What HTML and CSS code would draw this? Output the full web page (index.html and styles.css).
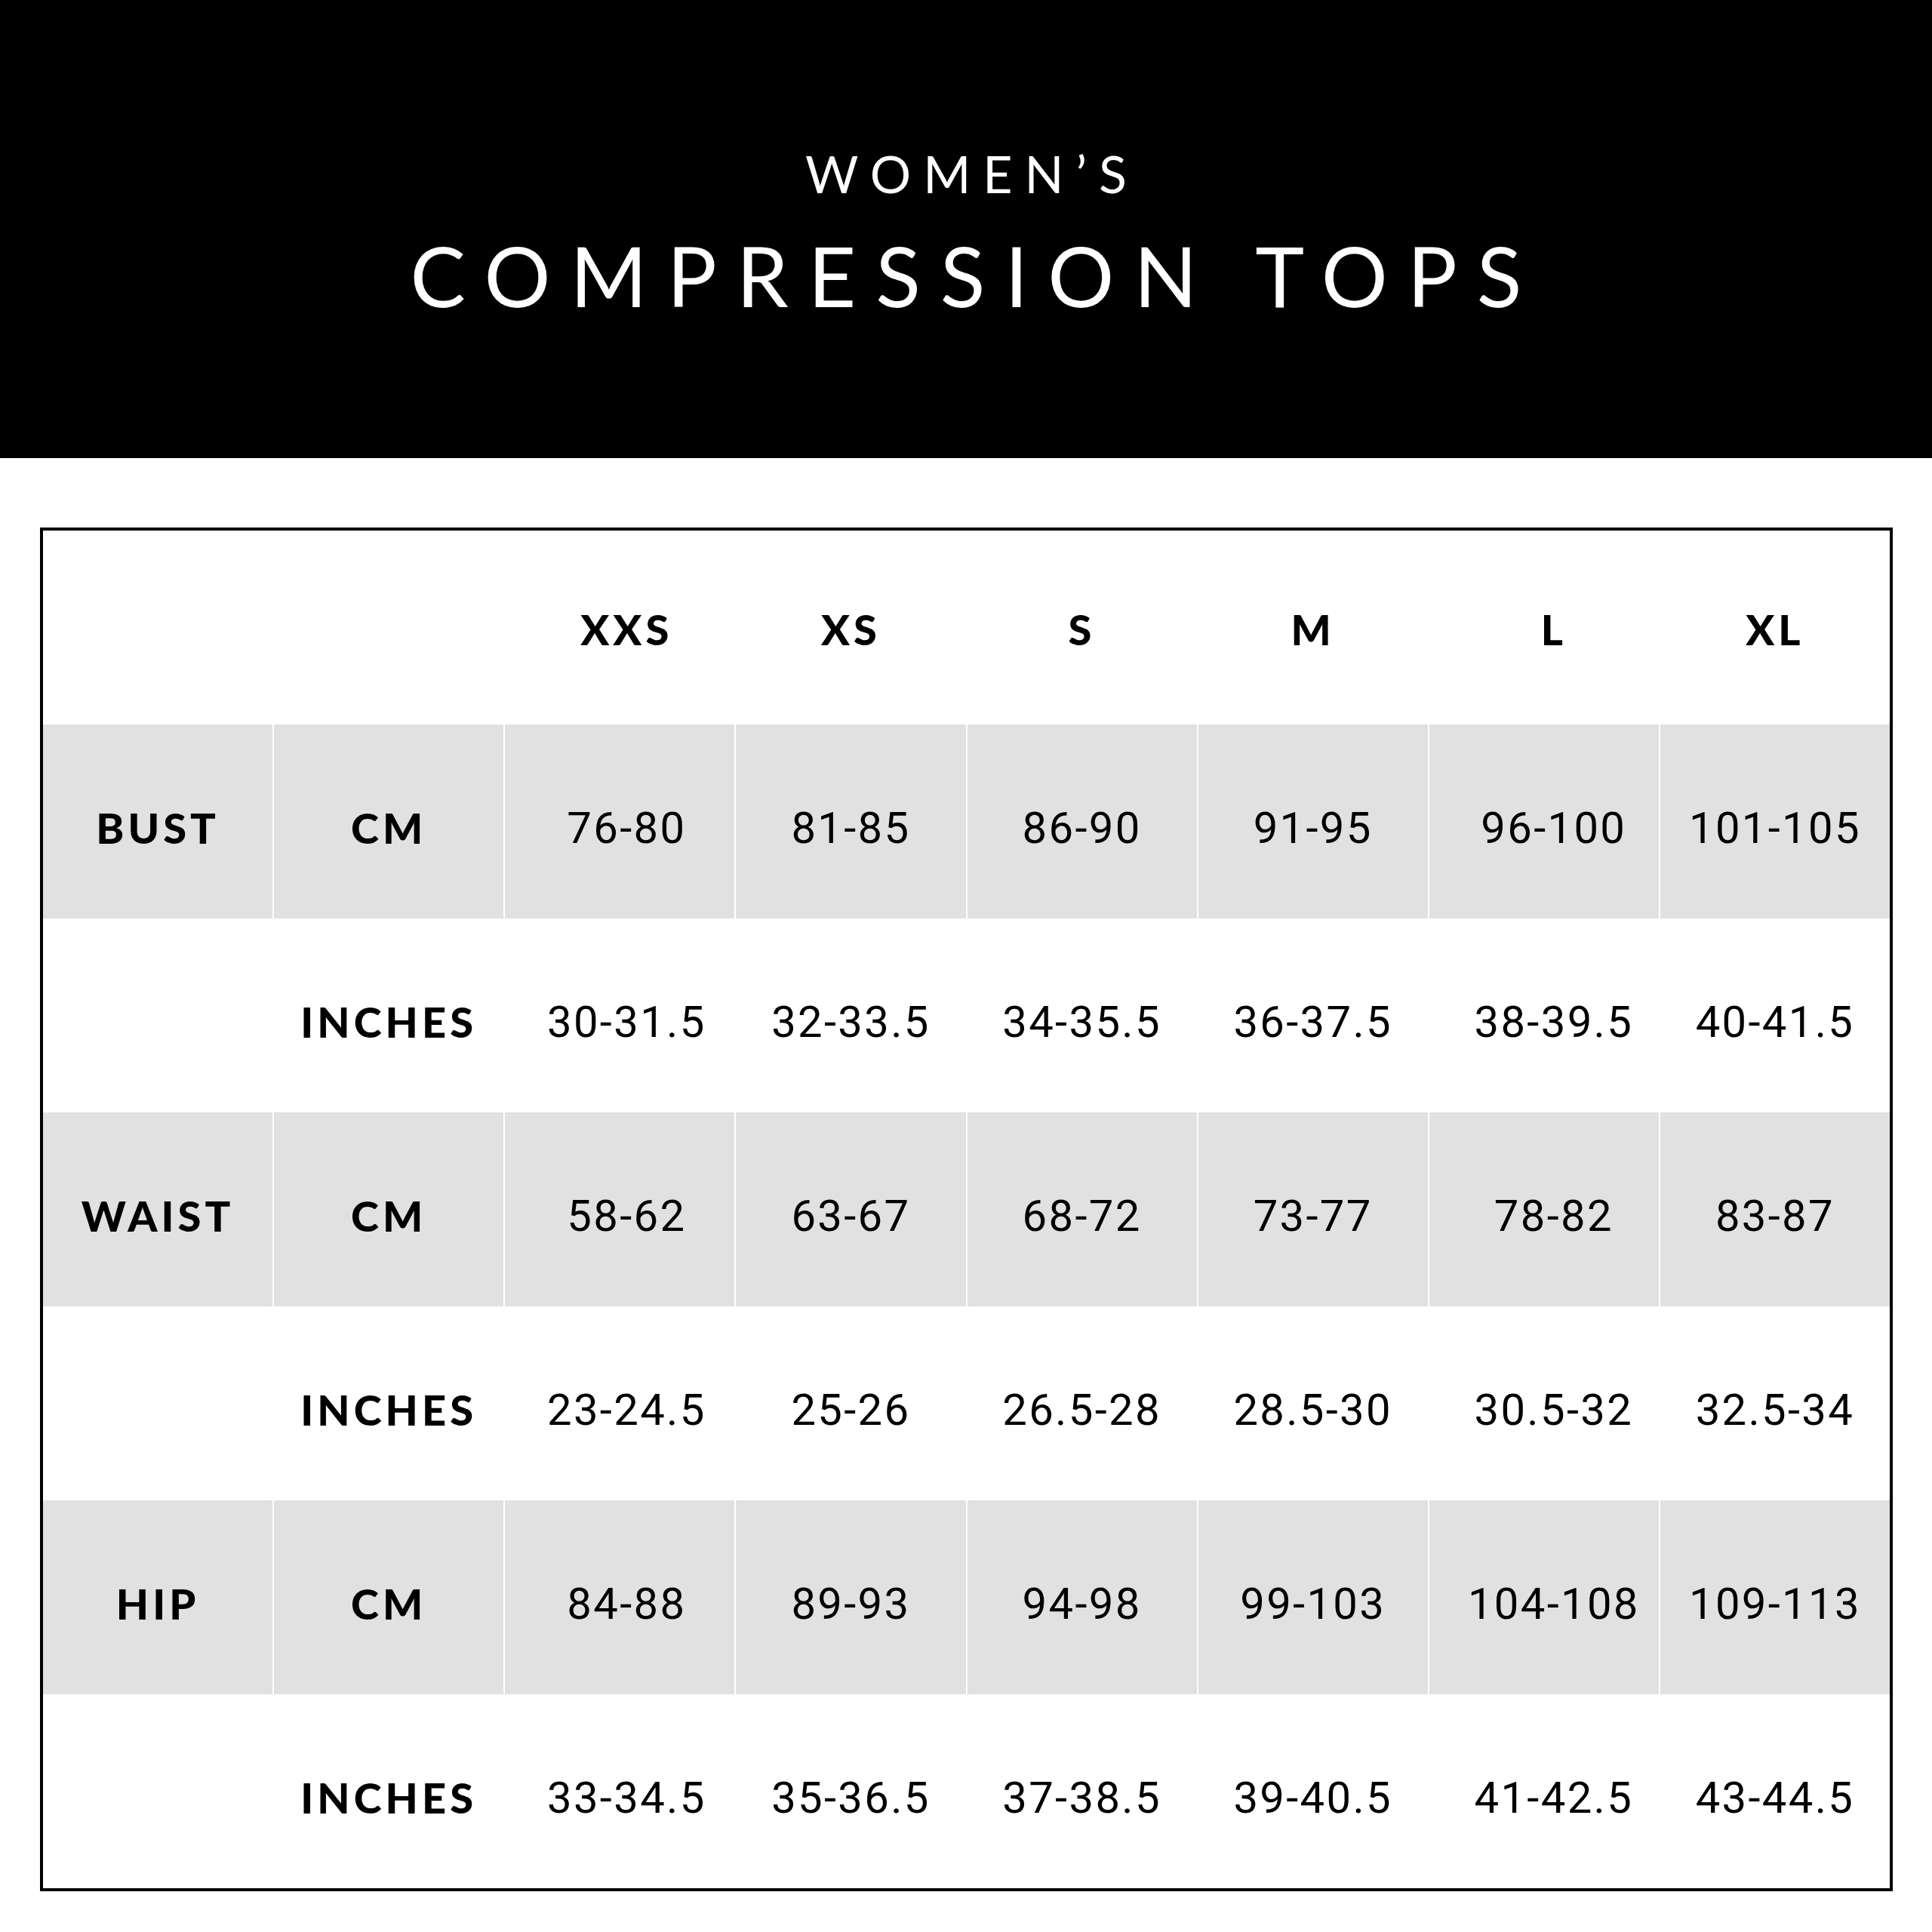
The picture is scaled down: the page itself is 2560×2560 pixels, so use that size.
FILE: index.html
```html
<!DOCTYPE html>
<html lang="en">
<head>
<meta charset="utf-8">
<title>Women's Compression Tops Size Chart</title>
<link rel="stylesheet" href="styles.css">
</head>
<body>
<header class="hero">
  <div class="eyebrow">WOMEN’S</div>
  <h1 class="title">COMPRESSION TOPS</h1>
</header>
<main class="chart">
  <div class="row head">
    <div class="cell"></div><div class="cell"></div>
    <div class="cell label">XXS</div><div class="cell label">XS</div><div class="cell label">S</div>
    <div class="cell label">M</div><div class="cell label">L</div><div class="cell label">XL</div>
  </div>
  <div class="row shade">
    <div class="cell label">BUST</div><div class="cell label">CM</div>
    <div class="cell num">76-80</div><div class="cell num">81-85</div><div class="cell num">86-90</div>
    <div class="cell num">91-95</div><div class="cell num">96-100</div><div class="cell num">101-105</div>
  </div>
  <div class="row">
    <div class="cell"></div><div class="cell label">INCHES</div>
    <div class="cell num">30-31.5</div><div class="cell num">32-33.5</div><div class="cell num">34-35.5</div>
    <div class="cell num">36-37.5</div><div class="cell num">38-39.5</div><div class="cell num">40-41.5</div>
  </div>
  <div class="row shade">
    <div class="cell label">WAIST</div><div class="cell label">CM</div>
    <div class="cell num">58-62</div><div class="cell num">63-67</div><div class="cell num">68-72</div>
    <div class="cell num">73-77</div><div class="cell num">78-82</div><div class="cell num">83-87</div>
  </div>
  <div class="row">
    <div class="cell"></div><div class="cell label">INCHES</div>
    <div class="cell num">23-24.5</div><div class="cell num">25-26</div><div class="cell num">26.5-28</div>
    <div class="cell num">28.5-30</div><div class="cell num">30.5-32</div><div class="cell num">32.5-34</div>
  </div>
  <div class="row shade">
    <div class="cell label">HIP</div><div class="cell label">CM</div>
    <div class="cell num">84-88</div><div class="cell num">89-93</div><div class="cell num">94-98</div>
    <div class="cell num">99-103</div><div class="cell num">104-108</div><div class="cell num">109-113</div>
  </div>
  <div class="row">
    <div class="cell"></div><div class="cell label">INCHES</div>
    <div class="cell num">33-34.5</div><div class="cell num">35-36.5</div><div class="cell num">37-38.5</div>
    <div class="cell num">39-40.5</div><div class="cell num">41-42.5</div><div class="cell num">43-44.5</div>
  </div>
</main>
</body>
</html>
```

FILE: styles.css
```css
* { box-sizing: border-box; }
html, body { margin: 0; padding: 0; background: #ffffff; }
body { width: 2560px; font-family: "Lato", "Liberation Sans", sans-serif; color: #000; }

.hero {
  height: 607px;
  background: #000;
  color: #fff;
  display: flex;
  flex-direction: column;
  align-items: center;
  padding-top: 190px;
}
.eyebrow {
  font-family: "Lato", sans-serif;
  font-weight: 400;
  font-size: 68px;
  line-height: 80px;
  letter-spacing: 16px;
  margin-right: -16px;
}
.title {
  margin: 34px -26px 0 0;
  font-family: "Lato", sans-serif;
  font-weight: 400;
  font-size: 110px;
  line-height: 120px;
  letter-spacing: 26px;
}

.chart {
  margin: 92px 52px 0 53px;
  border: 4px solid #000;
  background: #fff;
}
.row {
  display: grid;
  grid-template-columns: repeat(8, 1fr);
  column-gap: 2px;
  height: 257px;
}
.row.shade .cell { background: #e1e1e1; }
.cell {
  display: flex;
  align-items: center;
  justify-content: center;
  padding-top: 16px;
}
.row.head .cell { padding-top: 4px; }
.cell:nth-child(3) { padding-left: 18px; }
.cell:nth-child(7) { padding-left: 26px; }
.label {
  font-family: "Lato", sans-serif;
  font-weight: 900;
  font-size: 56px;
  letter-spacing: 0.09em;
}
.num {
  font-family: "Roboto", sans-serif;
  font-weight: 400;
  font-size: 58px;
  letter-spacing: 0.04em;
}
```
